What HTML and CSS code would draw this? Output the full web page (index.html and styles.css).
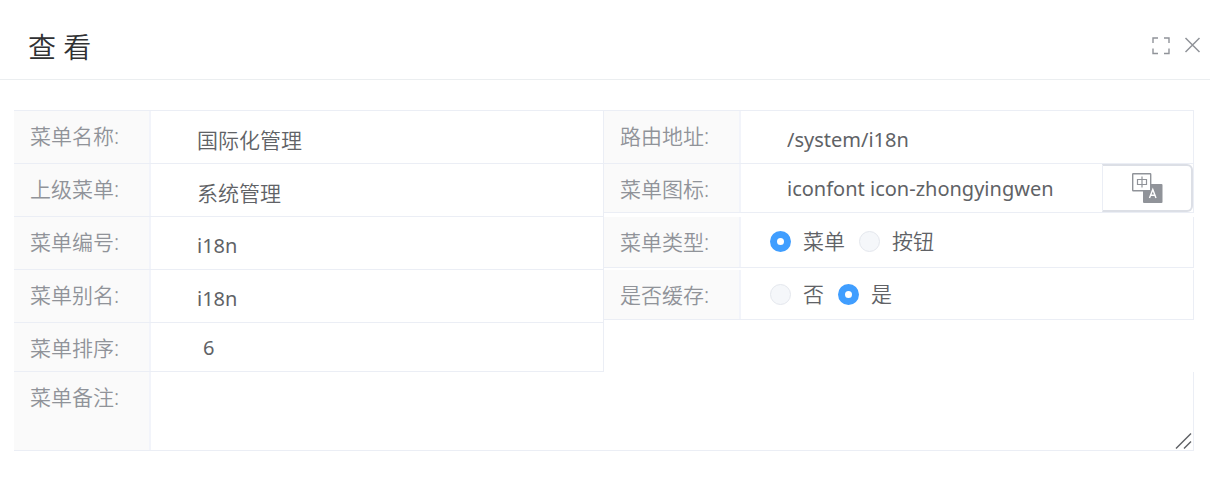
FILE: index.html
```html
<!DOCTYPE html>
<html lang="zh-CN">
<head>
<meta charset="utf-8">
<title>查看</title>
<link rel="stylesheet" href="styles.css">
</head>
<body>
<main class="dialog">
  <header class="dialog-header">
    <h1 class="dialog-title">查 看</h1>
    <div class="dialog-actions">
      <button class="icon-button" type="button" aria-label="全屏">
        <svg width="20" height="20" viewBox="0 0 20 20" fill="none" stroke="#909399" stroke-width="1.4"><path d="M2 7V2h5M13 2h5v5M18 12.500v5h-5M7 17.500H2v-5"/></svg>
      </button>
      <button class="icon-button" type="button" aria-label="关闭">
        <svg width="20" height="20" viewBox="0 0 20 20" fill="none" stroke="#909399" stroke-width="1.5"><path d="M2.500 2l14 14M16.500 2L2.500 16"/></svg>
      </button>
    </div>
  </header>
  <form class="form">
    <div class="columns">
      <div class="column">
        <div class="row"><label class="label" for="name">菜单名称:</label><input class="input" id="name" type="text" value="国际化管理" readonly></div>
        <div class="row"><label class="label" for="parent">上级菜单:</label><input class="input" id="parent" type="text" value="系统管理" readonly></div>
        <div class="row"><label class="label" for="code">菜单编号:</label><input class="input input-latin" id="code" type="text" value="i18n" readonly></div>
        <div class="row"><label class="label" for="alias">菜单别名:</label><input class="input input-latin" id="alias" type="text" value="i18n" readonly></div>
        <div class="row row-compact"><label class="label" for="sort">菜单排序:</label><input class="input input-latin input-number" id="sort" type="text" value="6" readonly></div>
      </div>
      <div class="column">
        <div class="row"><label class="label" for="path">路由地址:</label><input class="input input-latin" id="path" type="text" value="/system/i18n" readonly></div>
        <div class="row row-compact">
          <label class="label" for="icon">菜单图标:</label><input class="input input-latin" id="icon" type="text" value="iconfont icon-zhongyingwen" readonly>
          <button class="icon-picker" type="button" aria-label="选择图标">
            <svg width="32" height="32" viewBox="0 0 32 32"><rect x="12" y="12" width="19.500" height="19" rx="1" fill="#909399"/><rect x="1.700" y="1.700" width="18" height="17" rx=".5" fill="#fff" stroke="#909399" stroke-width="1.400"/><path d="M6.500 7.500h9v5h-9zM11 4.500v11" fill="none" stroke="#909399" stroke-width="1.200"/><path d="M18.500 26l3.300-8.500L25 26M19.700 23.200h4.200" fill="none" stroke="#fff" stroke-width="1.400"/></svg>
          </button>
        </div>
        <div class="row row-spaced" role="radiogroup" aria-labelledby="type-label">
          <span class="label" id="type-label">菜单类型:</span>
          <div class="radios">
            <label class="radio"><input type="radio" name="type" checked>菜单</label>
            <label class="radio"><input type="radio" name="type">按钮</label>
          </div>
        </div>
        <div class="row row-cache" role="radiogroup" aria-labelledby="cache-label">
          <span class="label" id="cache-label">是否缓存:</span>
          <div class="radios">
            <label class="radio"><input type="radio" name="cache">否</label>
            <label class="radio"><input type="radio" name="cache" checked>是</label>
          </div>
        </div>
      </div>
    </div>
    <div class="row row-remark">
      <label class="label" for="remark">菜单备注:</label><textarea class="textarea" id="remark" readonly></textarea>
      <svg class="grip" width="18" height="18" viewBox="0 0 18 18" fill="none" stroke="#606266" stroke-width="1.500"><path d="M2 16.500L17 1.500M10 16.500l7-7"/></svg>
    </div>
  </form>
</main>
</body>
</html>
```
FILE: styles.css
```css
* { box-sizing: border-box; }

body {
  margin: 0;
  padding-right: 22px;
  background: #fff;
  color: #606266;
  font: 350 21px/30px "Noto Sans", "Noto Sans CJK SC", sans-serif;
}

input, textarea, button { font: inherit; color: inherit; }

.dialog-header {
  display: flex;
  justify-content: space-between;
  align-items: center;
  height: 80px;
  padding: 12px 7px 0 28px;
  border-bottom: 1px solid #ebeef0;
}

.dialog-title {
  margin: 0;
  padding-top: 2px;
  color: #303133;
  font-size: 28px;
  font-weight: 350;
  line-height: 36px;
}

.dialog-actions { display: flex; gap: 12px; }

.icon-button {
  display: flex;
  padding: 0;
  border: 0;
  background: none;
}

.form { padding: 30px 16px 0 14px; }

.columns {
  display: grid;
  grid-template-columns: 1fr 1fr;
  align-items: start;
  border-top: 1px solid #ebeef5;
}

.row {
  position: relative;
  display: flex;
  min-width: 0;
  min-height: 53px;
  border: 0 solid #ebeef5;
  border-width: 0 1px 1px 0;
}

.row-compact { min-height: 49px; }
.row-spaced { min-height: 51px; margin-top: 4px; }
.row-cache { min-height: 50px; margin-top: 2px; }
.row-remark { min-height: 79px; }

.label {
  flex: none;
  width: 137px;
  padding: 10px 0 0 16px;
  border-right: 2px solid #f2f4fa;
  background: #fafafa;
  color: #909399;
}

.input {
  flex: 1;
  min-width: 0;
  padding: 6px 0 0 46px;
  border: 0;
  outline: 0;
  background: none;
}

.input-latin { font-size: 20px; font-weight: 400; }

.row-compact .input { padding-top: 2px; }
.row-compact .input-number { padding-left: 52px; }

.icon-picker {
  display: flex;
  flex: none;
  align-items: center;
  justify-content: center;
  width: 91px;
  padding: 0;
  border: 2px solid #dcdfe6;
  border-left: 1px solid #ebeef5;
  border-radius: 0 6px 6px 0;
  background: #fff;
}

.radios {
  display: flex;
  align-items: flex-start;
  gap: 14px;
  padding: 9px 0 0 29px;
}

.radio { display: flex; align-items: center; gap: 12px; }

.radio input {
  appearance: none;
  width: 21px;
  height: 21px;
  margin: 0;
  border: 1px solid #e4e7ed;
  border-radius: 50%;
  background: #f5f7fa;
}

.radio input:checked {
  border: 7px solid #409eff;
  background: #fff;
}

.textarea {
  flex: 1;
  min-width: 0;
  padding: 8px 46px;
  border: 0;
  outline: 0;
  resize: none;
  background: none;
}

.grip { position: absolute; right: 1px; bottom: 0; }
```
